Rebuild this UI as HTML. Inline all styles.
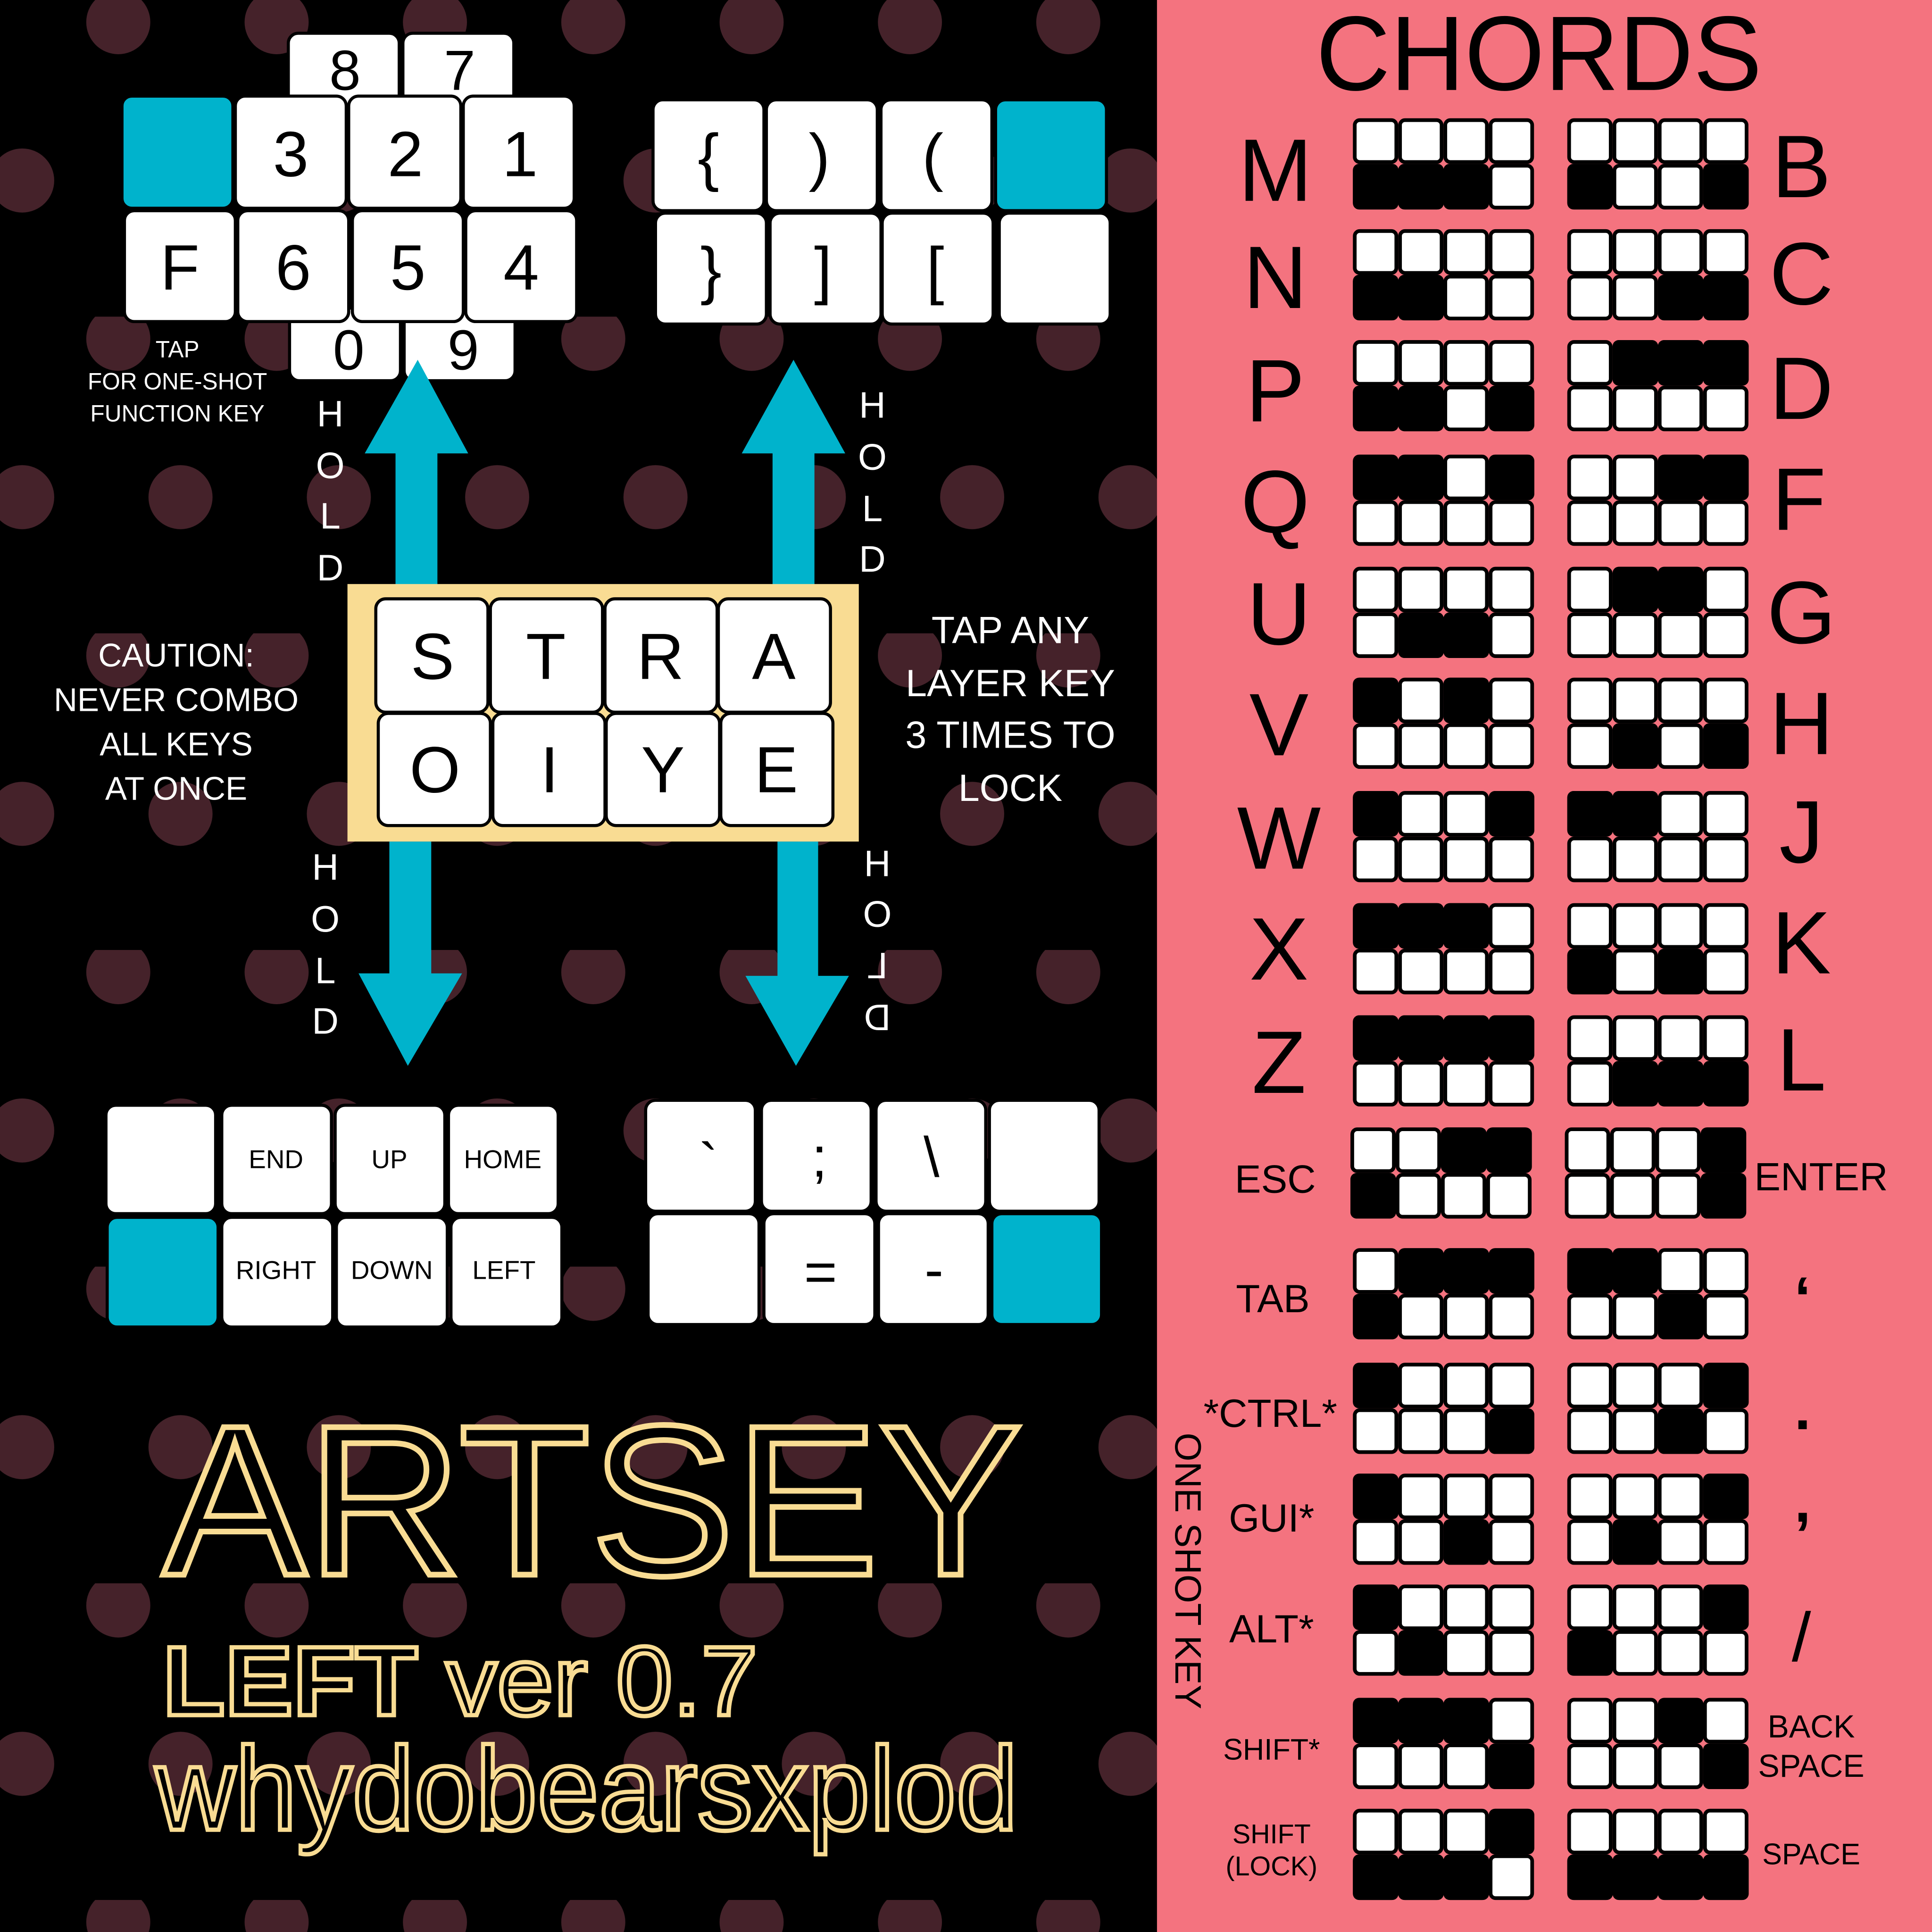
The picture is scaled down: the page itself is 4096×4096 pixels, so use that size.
<!DOCTYPE html>
<html><head><meta charset="utf-8"><style>html,body{margin:0;padding:0;background:#000}svg{display:block}</style></head><body>
<svg width="4096" height="4096" viewBox="0 0 1568 1568" xmlns="http://www.w3.org/2000/svg" font-family="Liberation Sans, Arial, sans-serif">
<defs>
<pattern id="dots" x="0" y="0" width="128.5" height="257" patternUnits="userSpaceOnUse">
<circle cx="96" cy="18" r="26" fill="#45222a"/>
<circle cx="18" cy="146.5" r="26" fill="#45222a"/>
<circle cx="146.5" cy="146.5" r="26" fill="#45222a"/>
</pattern>
<g id="g">
<rect x="1.5" y="1.5" width="33.75" height="34" rx="4" fill="#fff" stroke="#000" stroke-width="3"/>
<rect x="38.25" y="1.5" width="33.75" height="34" rx="4" fill="#fff" stroke="#000" stroke-width="3"/>
<rect x="75" y="1.5" width="33.75" height="34" rx="4" fill="#fff" stroke="#000" stroke-width="3"/>
<rect x="111.75" y="1.5" width="33.75" height="34" rx="4" fill="#fff" stroke="#000" stroke-width="3"/>
<rect x="1.5" y="38.5" width="33.75" height="34" rx="4" fill="#fff" stroke="#000" stroke-width="3"/>
<rect x="38.25" y="38.5" width="33.75" height="34" rx="4" fill="#fff" stroke="#000" stroke-width="3"/>
<rect x="75" y="38.5" width="33.75" height="34" rx="4" fill="#fff" stroke="#000" stroke-width="3"/>
<rect x="111.75" y="38.5" width="33.75" height="34" rx="4" fill="#fff" stroke="#000" stroke-width="3"/>
</g>
<rect id="b" x="0" y="0" width="37" height="37" rx="5" fill="#000"/>
</defs>

<rect x="0" y="0" width="940" height="1568" fill="#000"/>
<rect x="0" y="0" width="940" height="1568" fill="url(#dots)"/>
<rect x="939" y="0" width="629" height="1568" fill="#f4737f"/>

<g stroke="#000" stroke-width="2.5">
<rect x="234" y="27" width="90" height="60" rx="8" fill="#fff"/>
<rect x="327" y="27" width="90" height="60" rx="8" fill="#fff"/>
<rect x="235" y="250" width="90" height="59" rx="8" fill="#fff"/>
<rect x="328" y="250" width="90" height="59" rx="8" fill="#fff"/>
<rect x="99" y="78" width="90" height="91" rx="8" fill="#00b3cc"/>
<rect x="191" y="78" width="90" height="91" rx="8" fill="#fff"/>
<rect x="283" y="78" width="91" height="91" rx="8" fill="#fff"/>
<rect x="376" y="78" width="90" height="91" rx="8" fill="#fff"/>
<rect x="101" y="171" width="90" height="90" rx="8" fill="#fff"/>
<rect x="193" y="171" width="90" height="90" rx="8" fill="#fff"/>
<rect x="286" y="171" width="90" height="90" rx="8" fill="#fff"/>
<rect x="378" y="171" width="90" height="90" rx="8" fill="#fff"/>
<rect x="530" y="81" width="90" height="90" rx="8" fill="#fff"/>
<rect x="622" y="81" width="90" height="90" rx="8" fill="#fff"/>
<rect x="715" y="81" width="90" height="90" rx="8" fill="#fff"/>
<rect x="808" y="81" width="90" height="90" rx="8" fill="#00b3cc"/>
<rect x="532" y="173" width="90" height="90" rx="8" fill="#fff"/>
<rect x="625" y="173" width="90" height="90" rx="8" fill="#fff"/>
<rect x="716" y="173" width="90" height="90" rx="8" fill="#fff"/>
<rect x="811" y="173" width="90" height="90" rx="8" fill="#fff"/>
</g>
<g font-size="52" text-anchor="middle" fill="#000">
<text x="280" y="73" font-size="46">8</text>
<text x="373" y="73" font-size="46">7</text>
<text x="283" y="300" font-size="46">0</text>
<text x="376" y="300" font-size="46">9</text>
<text x="236" y="143">3</text><text x="329" y="143">2</text><text x="422" y="143">1</text>
<text x="146" y="235">F</text><text x="238" y="235">6</text><text x="331" y="235">5</text><text x="423" y="235">4</text>
<text x="575" y="145">{</text><text x="665" y="145">)</text><text x="757" y="145">(</text>
<text x="577" y="237">}</text><text x="668" y="237">]</text><text x="759" y="237">[</text>
</g>

<g fill="#00b3cc">
<polygon points="339,292 380,368 355,368 355,476 321,476 321,368 296,368"/>
<polygon points="644,292 686,368 661,368 661,476 627,476 627,368 602,368"/>
<polygon points="316,683 350,683 350,790 375,790 331,865 291,790 316,790"/>
<polygon points="631,683 664,683 664,792 689,792 646,865 605,792 631,792"/>
</g>

<rect x="282" y="474" width="415" height="209" fill="#f9dc93"/>
<g stroke="#000" stroke-width="2.5" fill="#fff">
<rect x="305" y="486" width="91" height="92" rx="8"/>
<rect x="398" y="486" width="91" height="92" rx="8"/>
<rect x="491" y="486" width="91" height="92" rx="8"/>
<rect x="583" y="486" width="91" height="92" rx="8"/>
<rect x="307" y="579" width="91" height="91" rx="8"/>
<rect x="400" y="579" width="91" height="91" rx="8"/>
<rect x="492" y="579" width="92" height="91" rx="8"/>
<rect x="585" y="579" width="91" height="91" rx="8"/>
</g>
<g font-size="53" text-anchor="middle" fill="#000">
<text x="351" y="551">S</text><text x="443" y="551">T</text><text x="536" y="551">R</text><text x="628" y="551">A</text>
<text x="353" y="643">O</text><text x="446" y="643">I</text><text x="538" y="643">Y</text><text x="630" y="643">E</text>
</g>

<g stroke="#000" stroke-width="2.5">
<rect x="86" y="897" width="89" height="88" rx="8" fill="#fff"/>
<rect x="180" y="897" width="89" height="88" rx="8" fill="#fff"/>
<rect x="272" y="897" width="89" height="88" rx="8" fill="#fff"/>
<rect x="364" y="897" width="89" height="88" rx="8" fill="#fff"/>
<rect x="87" y="988" width="90" height="89" rx="8" fill="#00b3cc"/>
<rect x="180" y="988" width="90" height="89" rx="8" fill="#fff"/>
<rect x="273" y="988" width="90" height="89" rx="8" fill="#fff"/>
<rect x="366" y="988" width="90" height="89" rx="8" fill="#fff"/>
<rect x="524" y="893" width="89" height="90" rx="8" fill="#fff"/>
<rect x="618" y="893" width="89" height="90" rx="8" fill="#fff"/>
<rect x="711" y="893" width="89" height="90" rx="8" fill="#fff"/>
<rect x="803" y="893" width="89" height="90" rx="8" fill="#fff"/>
<rect x="526" y="985" width="90" height="90" rx="8" fill="#fff"/>
<rect x="620" y="985" width="90" height="90" rx="8" fill="#fff"/>
<rect x="713" y="985" width="89" height="90" rx="8" fill="#fff"/>
<rect x="805" y="985" width="89" height="90" rx="8" fill="#00b3cc"/>
</g>
<g font-size="21" text-anchor="middle" fill="#000">
<text x="224" y="948">END</text><text x="316" y="948">UP</text><text x="408" y="948">HOME</text>
<text x="224" y="1038">RIGHT</text><text x="318" y="1038">DOWN</text><text x="409" y="1038">LEFT</text>
</g>
<g font-size="46" text-anchor="middle" fill="#000">
<text x="575" y="960">`</text><text x="665" y="955">;</text><text x="756" y="955">\</text>
<text x="666" y="1048">=</text><text x="758" y="1046">-</text>
</g>

<g font-size="30" text-anchor="middle" fill="#fff">
<text x="268" y="346">H</text><text x="268" y="388">O</text><text x="268" y="429">L</text><text x="268" y="471">D</text>
<text x="708" y="339">H</text><text x="708" y="381">O</text><text x="708" y="423">L</text><text x="708" y="464">D</text>
<text x="264" y="714">H</text><text x="264" y="756">O</text><text x="264" y="798">L</text><text x="264" y="839">D</text>
<text x="712" y="711">H</text><text x="712" y="752">O</text>
<text transform="translate(712,794) scale(-1,1)">L</text>
<text transform="translate(712,836) scale(-1,1)">D</text>
</g>

<g fill="#fff" text-anchor="middle">
<g font-size="19"><text x="144" y="290">TAP</text><text x="144" y="316">FOR ONE-SHOT</text><text x="144" y="342">FUNCTION KEY</text></g>
<g font-size="26.5"><text x="143" y="541">CAUTION:</text><text x="143" y="577">NEVER COMBO</text><text x="143" y="613">ALL KEYS</text><text x="143" y="649">AT ONCE</text></g>
<g font-size="31"><text x="820" y="522">TAP ANY</text><text x="820" y="565">LAYER KEY</text><text x="820" y="607">3 TIMES TO</text><text x="820" y="650">LOCK</text></g>
</g>

<g fill="#000" stroke="#f9dc93">
<text x="132" y="1278" font-size="174" stroke-width="4.6" textLength="698" lengthAdjust="spacingAndGlyphs">ARTSEY</text>
<text x="132" y="1392" font-size="80" stroke-width="3.5" textLength="483" lengthAdjust="spacingAndGlyphs"><tspan font-weight="bold">LEFT</tspan> ver 0.7</text>
<text x="126" y="1485" font-size="96" stroke-width="3.5" textLength="700" lengthAdjust="spacingAndGlyphs">whydobearsxplod</text>
</g>

<text x="1068" y="73" font-size="86" fill="#000" textLength="362" lengthAdjust="spacingAndGlyphs">CHORDS</text>
<g font-size="72" text-anchor="middle" fill="#000">
<text x="1035" y="163">M</text><text x="1035" y="250">N</text><text x="1035" y="342">P</text><text x="1035" y="432">Q</text><text x="1038" y="523">U</text><text x="1038" y="613">V</text><text x="1038" y="705">W</text><text x="1038" y="795">X</text><text x="1038" y="887">Z</text>
<text x="1462" y="160">B</text><text x="1462" y="247">C</text><text x="1462" y="340">D</text><text x="1460" y="430">F</text><text x="1462" y="522">G</text><text x="1462" y="612">H</text><text x="1462" y="700">J</text><text x="1462" y="790">K</text><text x="1462" y="885">L</text>
</g>
<g text-anchor="middle" fill="#000">
<text x="1035" y="968" font-size="32">ESC</text>
<text x="1478" y="966" font-size="32">ENTER</text>
<text x="1033" y="1065" font-size="32">TAB</text>
<text x="1031" y="1158" font-size="32">*CTRL*</text>
<text x="1032" y="1243" font-size="32">GUI*</text>
<text x="1032" y="1333" font-size="32">ALT*</text>
<text x="1032" y="1428" font-size="24">SHIFT*</text>
<text x="1032" y="1496" font-size="22">SHIFT</text>
<text x="1032" y="1522" font-size="22">(LOCK)</text>
<text x="1463" y="1070" font-size="48" font-weight="bold">‘</text>
<text x="1463" y="1160" font-size="48" font-weight="bold">.</text>
<text x="1463" y="1235" font-size="48" font-weight="bold">,</text>
<text x="1462" y="1348" font-size="56">/</text>
<text x="1470" y="1410" font-size="26">BACK</text>
<text x="1470" y="1442" font-size="26">SPACE</text>
<text x="1470" y="1513" font-size="24">SPACE</text>
</g>
<text transform="translate(954,1275) rotate(90)" text-anchor="middle" font-size="30" fill="#000">ONE SHOT KEY</text>

<g transform="translate(1098,96)"><use href="#g"/><use href="#b" x="0" y="37"/><use href="#b" x="36.75" y="37"/><use href="#b" x="73.5" y="37"/></g>
<g transform="translate(1098,186)"><use href="#g"/><use href="#b" x="0" y="37"/><use href="#b" x="36.75" y="37"/></g>
<g transform="translate(1098,276)"><use href="#g"/><use href="#b" x="0" y="37"/><use href="#b" x="36.75" y="37"/><use href="#b" x="110.25" y="37"/></g>
<g transform="translate(1098,369)"><use href="#g"/><use href="#b" x="0"/><use href="#b" x="36.75"/><use href="#b" x="110.25"/></g>
<g transform="translate(1098,460)"><use href="#g"/><use href="#b" x="36.75" y="37"/><use href="#b" x="73.5" y="37"/></g>
<g transform="translate(1098,550)"><use href="#g"/><use href="#b" x="0"/><use href="#b" x="73.5"/></g>
<g transform="translate(1098,642)"><use href="#g"/><use href="#b" x="0"/><use href="#b" x="110.25"/></g>
<g transform="translate(1098,733)"><use href="#g"/><use href="#b" x="0"/><use href="#b" x="36.75"/><use href="#b" x="73.5"/></g>
<g transform="translate(1098,824)"><use href="#g"/><use href="#b" x="0"/><use href="#b" x="36.75"/><use href="#b" x="73.5"/><use href="#b" x="110.25"/></g>
<g transform="translate(1096,915)"><use href="#g"/><use href="#b" x="73.5"/><use href="#b" x="110.25"/><use href="#b" x="0" y="37"/></g>
<g transform="translate(1098,1013)"><use href="#g"/><use href="#b" x="36.75"/><use href="#b" x="73.5"/><use href="#b" x="110.25"/><use href="#b" x="0" y="37"/></g>
<g transform="translate(1098,1106)"><use href="#g"/><use href="#b" x="0"/><use href="#b" x="110.25" y="37"/></g>
<g transform="translate(1098,1196)"><use href="#g"/><use href="#b" x="0"/><use href="#b" x="73.5" y="37"/></g>
<g transform="translate(1098,1286)"><use href="#g"/><use href="#b" x="0"/><use href="#b" x="36.75" y="37"/></g>
<g transform="translate(1098,1378)"><use href="#g"/><use href="#b" x="0"/><use href="#b" x="36.75"/><use href="#b" x="73.5"/><use href="#b" x="110.25" y="37"/></g>
<g transform="translate(1098,1468)"><use href="#g"/><use href="#b" x="110.25"/><use href="#b" x="0" y="37"/><use href="#b" x="36.75" y="37"/><use href="#b" x="73.5" y="37"/></g>

<g transform="translate(1272,96)"><use href="#g"/><use href="#b" x="0" y="37"/><use href="#b" x="110.25" y="37"/></g>
<g transform="translate(1272,186)"><use href="#g"/><use href="#b" x="73.5" y="37"/><use href="#b" x="110.25" y="37"/></g>
<g transform="translate(1272,276)"><use href="#g"/><use href="#b" x="36.75"/><use href="#b" x="73.5"/><use href="#b" x="110.25"/></g>
<g transform="translate(1272,369)"><use href="#g"/><use href="#b" x="73.5"/><use href="#b" x="110.25"/></g>
<g transform="translate(1272,460)"><use href="#g"/><use href="#b" x="36.75"/><use href="#b" x="73.5"/></g>
<g transform="translate(1272,550)"><use href="#g"/><use href="#b" x="36.75" y="37"/><use href="#b" x="110.25" y="37"/></g>
<g transform="translate(1272,642)"><use href="#g"/><use href="#b" x="0"/><use href="#b" x="36.75"/></g>
<g transform="translate(1272,733)"><use href="#g"/><use href="#b" x="0" y="37"/><use href="#b" x="73.5" y="37"/></g>
<g transform="translate(1272,824)"><use href="#g"/><use href="#b" x="36.75" y="37"/><use href="#b" x="73.5" y="37"/><use href="#b" x="110.25" y="37"/></g>
<g transform="translate(1270,915)"><use href="#g"/><use href="#b" x="110.25"/><use href="#b" x="110.25" y="37"/></g>
<g transform="translate(1272,1013)"><use href="#g"/><use href="#b" x="0"/><use href="#b" x="36.75"/><use href="#b" x="73.5" y="37"/></g>
<g transform="translate(1272,1106)"><use href="#g"/><use href="#b" x="110.25"/><use href="#b" x="73.5" y="37"/></g>
<g transform="translate(1272,1196)"><use href="#g"/><use href="#b" x="110.25"/><use href="#b" x="36.75" y="37"/></g>
<g transform="translate(1272,1286)"><use href="#g"/><use href="#b" x="110.25"/><use href="#b" x="0" y="37"/></g>
<g transform="translate(1272,1378)"><use href="#g"/><use href="#b" x="73.5"/><use href="#b" x="110.25" y="37"/></g>
<g transform="translate(1272,1468)"><use href="#g"/><use href="#b" x="0" y="37"/><use href="#b" x="36.75" y="37"/><use href="#b" x="73.5" y="37"/><use href="#b" x="110.25" y="37"/></g>
</svg>
</body></html>
